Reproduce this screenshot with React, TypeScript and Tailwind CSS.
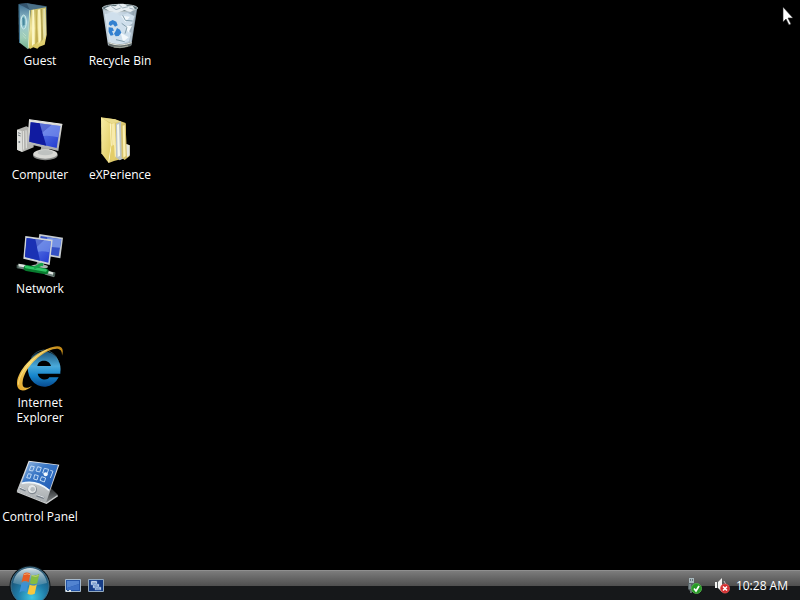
import type { ReactNode } from "react";

function GuestIcon() {
  return (
    <svg viewBox="48 6 144 144" className="size-12" aria-hidden="true">
      <defs>
        <linearGradient id="guestCover" x1="0" y1="0" x2="0" y2="1">
          <stop offset="0" stopColor="#3f6f92" />
          <stop offset="0.4" stopColor="#9cc8d2" />
          <stop offset="0.75" stopColor="#9fcdb6" />
          <stop offset="1" stopColor="#6fae8c" />
        </linearGradient>
        <linearGradient id="guestPage" x1="0" y1="0" x2="0" y2="1">
          <stop offset="0" stopColor="#c9bd68" />
          <stop offset="0.5" stopColor="#f1e59b" />
          <stop offset="1" stopColor="#d9c65e" />
        </linearGradient>
      </defs>
      <path d="M58 11 L78 9 L140 19 L138 112 L120 126 L84 40Z" fill="#34556f" />
      <path d="M80 10 L139 20 L139 30 L90 32Z" fill="#4a6f86" />
      <path d="M92 30 L138 22 L140 104 L134 134 L118 140 L112 146 L100 142 L90 147 L84 140Z" fill="url(#guestPage)" />
      <path d="M97 30 L102 29 L104 130 L96 138Z" fill="#fbf6c6" />
      <path d="M107 30 L110 29 L114 124 L106 134Z" fill="#c2ae52" />
      <path d="M114 29 L120 28 L124 118 L116 132Z" fill="#fbf3bb" />
      <path d="M123 28 L126 27 L130 116 L124 126Z" fill="#b3a452" />
      <path d="M130 27 L135 26 L137 104 L131 120Z" fill="#e3e2b2" />
      <path d="M56 12 L90 30 L84 148 L57 127Z" fill="url(#guestCover)" />
      <path d="M56 12 L60 14 L60 130 L57 127Z" fill="#3f7290" />
      <ellipse cx="71" cy="66" rx="8" ry="21" fill="#8cc2cb" stroke="#d4eef0" strokeWidth="3" />
      <path d="M67 55 Q71 48 74 57 L74 75 L68 77Z" fill="#4a89a0" />
      <path d="M68 98 L78 108 M68 106 L78 116" stroke="#c7e7ce" strokeWidth="2" />
      <path d="M89 31 L85 146" stroke="#d2e6c4" strokeWidth="3" />
    </svg>
  );
}

function RecycleIcon() {
  return (
    <svg viewBox="48 6 144 144" className="size-12" aria-hidden="true">
      <defs>
        <linearGradient id="binGlass" x1="0" y1="0" x2="1" y2="0">
          <stop offset="0" stopColor="#a9b9c4" />
          <stop offset="0.3" stopColor="#dce9f3" />
          <stop offset="0.7" stopColor="#b8c9d7" />
          <stop offset="1" stopColor="#7b8e9b" />
        </linearGradient>
      </defs>
      <path d="M67 23 L172 23 L154 136 Q120 150 84 136Z" fill="url(#binGlass)" />
      <ellipse cx="120" cy="24" rx="53" ry="11" fill="#596e75" stroke="#b3bfc3" strokeWidth="3" />
      <path d="M74 25 L92 17 L106 19 L116 12 L130 11 L144 19 L158 18 L165 28 L151 36 L133 31 L112 38 L88 33Z" fill="#e6edf1" />
      <path d="M116 13 L128 24 L144 20 M94 19 L108 29 L122 24 M148 24 L161 28" stroke="#9dafbb" strokeWidth="3" fill="none" />
      <path d="M74 43 L99 37 L119 47 L143 39 L163 48 L157 71 L137 82 L153 99 L147 124 L119 132 L90 125 L83 92Z" fill="#cfdfec" />
      <path d="M123 47 L150 50 L136 66Z M135 78 L156 77 L145 98Z M122 98 L146 112 L129 125Z" fill="#f4f9fc" />
      <path d="M128 46 L136 61 L158 63 M125 70 L141 82 L135 101 M108 119 L134 125" stroke="#829ead" strokeWidth="3" fill="none" />
      <g fill="#3280d0">
        <path d="M88 65 L98 60 L109 65 L113 76 L105 80 L99 73 L92 78 L86 73Z" />
        <path d="M86 82 L98 83 L102 92 L96 93 L101 105 L92 107 L85 95Z" />
        <path d="M111 84 L120 89 L124 98 L116 108 L107 109 L102 101 L107 93Z" />
      </g>
      <path d="M84 126 Q119 140 156 126 L153 138 Q119 151 87 138Z" fill="#626c6c" />
      <path d="M85 128 Q119 142 155 128" stroke="#e5e7df" strokeWidth="3" fill="none" />
      <path d="M101 141 Q124 145 144 138" stroke="#a5a99b" strokeWidth="3" fill="none" />
      <path d="M74 32 L91 127 M166 32 L151 127" stroke="#edf5f8" strokeWidth="2" opacity=".5" />
    </svg>
  );
}

function ScreenGradient({ id }: { id: string }) {
  return (
    <linearGradient id={id} x1="0" y1="0" x2="1" y2="1">
      <stop offset="0" stopColor="#2947c4" />
      <stop offset="0.4" stopColor="#101da3" />
      <stop offset="0.42" stopColor="#526ee0" />
      <stop offset="1" stopColor="#2038d0" />
    </linearGradient>
  );
}

function ComputerIcon() {
  return (
    <svg viewBox="48 18 144 144" className="size-12" aria-hidden="true">
      <defs>
        <ScreenGradient id="pcScreen" />
        <linearGradient id="pcMetal" x1="0" y1="0" x2="0" y2="1">
          <stop offset="0" stopColor="#e5e5e1" />
          <stop offset="1" stopColor="#a9abac" />
        </linearGradient>
      </defs>
      <path d="M51 59 L79 49 L100 59 L101 112 L67 126 L51 119Z" fill="#b4b4b0" />
      <path d="M51 59 L65 63 L67 126 L51 119Z" fill="#dedfdb" />
      <path d="M54 68 L62 71 M54 75 L62 78" stroke="#777d82" strokeWidth="3" />
      <circle cx="58" cy="96" r="3" fill="#737c84" />
      <path d="M70 63 L71 119 M78 61 L79 115" stroke="#e4e5e1" strokeWidth="3" />
      <path d="M124 106 L148 111 L148 129 L121 129Z" fill="#a7a8a3" />
      <ellipse cx="136" cy="136" rx="37" ry="15" fill="#868886" />
      <ellipse cx="136" cy="132" rx="36" ry="14" fill="#d8d8d4" />
      <ellipse cx="136" cy="128" rx="23" ry="8" fill="#bfc2c0" />
      <path d="M87 29 L187 43 L175 123 L81 101Z" fill="url(#pcMetal)" />
      <path d="M92 37 L181 48 L170 114 L88 95Z" fill="url(#pcScreen)" />
      <path d="M92 37 L119 40 L139 107 L88 95Z" fill="#101ba0" />
      <path d="M119 40 L181 48 L175 82 Q149 76 130 78Z" fill="#829af0" opacity=".6" />
      <path d="M87 29 L187 43" stroke="#e9e9e6" strokeWidth="3" />
    </svg>
  );
}

function FolderIcon() {
  return (
    <svg viewBox="48 18 144 144" className="size-12" aria-hidden="true">
      <defs>
        <linearGradient id="folderFront" x1="0" y1="0" x2="1" y2="1">
          <stop offset="0" stopColor="#f8eda7" />
          <stop offset="1" stopColor="#dfc95b" />
        </linearGradient>
      </defs>
      <path d="M63 22 L105 28 L137 39 L140 142 L122 148 L102 153 L86 159Z" fill="#dcc86b" />
      <path d="M94 41 L104 39 L109 137 L99 151Z" fill="#f8ebab" />
      <path d="M108 41 L123 34 L132 145 L119 151 L108 142Z" fill="#bac3c5" />
      <path d="M111 44 L117 42 L120 137 L113 141Z" fill="#f6f7eb" />
      <path d="M123 43 L137 42 L139 103 L149 106 L149 138 L134 150 L125 143Z" fill="#d6c06a" />
      <path d="M128 47 L134 45 L137 138 L130 143Z" fill="#faf0b3" />
      <path d="M139 102 L149 106 L149 136 L141 142Z" fill="#e4e6df" />
      <path d="M63 22 L91 41 L95 107 L86 159 L64 130Z" fill="url(#folderFront)" />
      <path d="M91 40 L94 107 L86 157" stroke="#fff8c8" strokeWidth="3" fill="none" />
      <path d="M94 109 L102 104 L105 146 L99 153 L90 147Z" fill="#e3cd68" />
      <path d="M64 23 L105 28 L122 35 L94 40Z" fill="#eadc8d" />
    </svg>
  );
}

function NetworkIcon() {
  return (
    <svg viewBox="48 15 144 144" className="size-12" aria-hidden="true">
      <defs><ScreenGradient id="netScreen" /></defs>
      <path d="M118 27 L189 38 L181 100 L109 87Z" fill="#c5cbd0" />
      <path d="M122 33 L184 43 L176 94 L113 82Z" fill="#3450c4" />
      <path d="M141 37 L184 43 L180 68 L145 65Z" fill="#7592e4" />
      <path d="M113 108 L133 113 L130 128 L106 126Z" fill="#8b9393" />
      <ellipse cx="118" cy="125" rx="26" ry="7" fill="#a9b3ae" />
      <path d="M76 33 L158 44 L149 120 L70 101Z" fill="#d0d5d8" />
      <path d="M80 39 L153 49 L145 113 L75 96Z" fill="url(#netScreen)" />
      <path d="M80 39 L106 43 L120 107 L75 96Z" fill="#1a31b4" />
      <path d="M106 43 L153 49 L148 82 Q129 77 114 80Z" fill="#7f9ceb" opacity=".6" />
      <path d="M55 123 L82 128 M136 142 L164 150" stroke="#70817d" strokeWidth="14" />
      <path d="M55 120 L82 125 M136 139 L164 147" stroke="#dfe5e1" strokeWidth="7" />
      <path d="M80 129 L137 139" stroke="#087b2f" strokeWidth="18" strokeLinecap="round" />
      <path d="M78 126 L137 136" stroke="#2fc765" strokeWidth="8" strokeLinecap="round" />
      <path d="M102 129 L124 118 L130 119" stroke="#16a54a" strokeWidth="9" fill="none" />
      <path d="M50 119 L55 119 L55 131 L50 129Z M160 142 L166 143 L165 155 L159 153Z" fill="#445850" />
    </svg>
  );
}

function ExplorerIcon() {
  return (
    <svg viewBox="48 12 144 144" className="size-12" aria-hidden="true">
      <defs>
        <linearGradient id="ieBlue" x1="0" y1="0" x2="0" y2="1">
          <stop offset="0" stopColor="#1d567c" />
          <stop offset="0.42" stopColor="#4aaadb" />
          <stop offset="0.68" stopColor="#1787cd" />
          <stop offset="1" stopColor="#084b90" />
        </linearGradient>
        <linearGradient id="ieGold" x1="0" y1="1" x2="1" y2="0">
          <stop offset="0" stopColor="#e0a327" />
          <stop offset="0.45" stopColor="#f5d66b" />
          <stop offset="1" stopColor="#c18410" />
        </linearGradient>
      </defs>
      <path d="M181 96 A49 53 0 1 0 176 112 L148 112 C141 124 116 119 113 101 L181 101Z M112 78 C115 57 148 57 153 78Z" fill="url(#ieBlue)" fillRule="evenodd" />
      <path d="M94 53 Q106 33 131 30 Q163 32 175 63" stroke="#5c9dba" strokeWidth="3" fill="none" opacity=".5" />
      <path d="M186 47 C195 19 178 11 141 27 C96 44 54 92 51 127 C49 157 76 158 96 138 C77 148 65 145 68 125 C73 88 111 48 145 33 C173 20 187 25 186 47Z" fill="url(#ieGold)" />
      <path d="M56 134 C53 106 92 54 142 29" stroke="#fff2a5" strokeWidth="2" fill="none" />
    </svg>
  );
}

function ControlPanelIcon() {
  return (
    <svg viewBox="48 9 144 144" className="size-12" aria-hidden="true">
      <defs>
        <linearGradient id="panelBlue" x1="0" y1="0" x2="1" y2="1">
          <stop offset="0" stopColor="#9dbde2" />
          <stop offset="0.4" stopColor="#3b78c6" />
          <stop offset="1" stopColor="#1d58b4" />
        </linearGradient>
        <linearGradient id="panelMetal" x1="0" y1="0" x2="0" y2="1">
          <stop offset="0" stopColor="#e8eaec" />
          <stop offset="1" stopColor="#a6abae" />
        </linearGradient>
        <linearGradient id="panelStand" x1="0" y1="0" x2="0" y2="1">
          <stop offset="0" stopColor="#26292b" />
          <stop offset="1" stopColor="#8d9193" />
        </linearGradient>
      </defs>
      <path d="M152 98 L174 120 L140 146 L128 138Z" fill="url(#panelStand)" />
      <path d="M86 17 L178 29 L138 143 L50 109Z" fill="url(#panelMetal)" />
      <path d="M88 20 L174 31 L149 104 Q112 76 65 84Z" fill="url(#panelBlue)" />
      <g fill="none" stroke="#bed9f5" strokeWidth="3">
        <path d="M93 33 L103 35 L98 48 L88 46Z M113 35 L124 38 L119 51 L108 48Z M133 40 L146 43 L141 57 L128 54Z" />
        <path d="M85 56 L94 58 L90 70 L80 68Z M104 59 L115 62 L111 75 L101 72Z M125 65 L137 69 L133 81 L120 76Z M151 46 L159 49 L151 69" />
      </g>
      <circle cx="137" cy="58" r="6" fill="#f3faff" />
      <path d="M65 85 Q110 74 147 106" stroke="#eef6fd" strokeWidth="5" fill="none" />
      <path d="M60 99 L77 106 M110 121 L132 129" stroke="#747d87" strokeWidth="7" />
      <path d="M60 97 L77 104 M110 119 L132 127" stroke="#e3e7ea" strokeWidth="3" />
      <circle cx="97" cy="104" r="14" fill="#818991" />
      <circle cx="96" cy="102" r="12" fill="#e5e8e9" />
      <circle cx="98" cy="103" r="7" fill="#b6bcc0" />
      <path d="M51 110 L139 145 L173 122" stroke="#c8cbcc" strokeWidth="4" fill="none" />
    </svg>
  );
}

function StartOrb() {
  return (
    <svg viewBox="0 0 42 42" className="size-[42px]" aria-hidden="true">
      <defs>
        <radialGradient id="orb" cx=".55" cy=".8" r=".75">
          <stop offset="0" stopColor="#3fc6e2" />
          <stop offset="0.5" stopColor="#1f7ca8" />
          <stop offset="1" stopColor="#1b4a6a" />
        </radialGradient>
        <linearGradient id="orbShine" x1="0" y1="0" x2="0" y2="1">
          <stop offset="0" stopColor="#d8e5e9" />
          <stop offset="1" stopColor="#6f9db3" stopOpacity=".45" />
        </linearGradient>
      </defs>
      <circle cx="21" cy="21" r="20.5" fill="#091116" />
      <circle cx="21" cy="21" r="19" fill="url(#orb)" stroke="#447087" strokeWidth="1" />
      <path d="M4 18 C7 -2 35 -2 38 18 Q21 23 4 18Z" fill="url(#orbShine)" />
      <g transform="translate(4 2) scale(.85)">
        <path d="M12.5 8 Q16 5 20.5 8 L18.5 18 Q14 15 10 18Z" fill="#e65d24" />
        <path d="M22 9 Q26 11 31 8 L28.5 19 Q24 21 20 19Z" fill="#84bd42" />
        <path d="M10 19.5 Q14 17 18 19.5 L16 30 Q12 27 7.5 30Z" fill="#3c91d4" />
        <path d="M19.5 21 Q24 23 28 20.5 L25.5 31.5 Q21 34 17 31.5Z" fill="#f7c83e" />
        <path d="M13 9 Q17 7 20 9 M22 10 Q27 12 30 10" stroke="#ffe1a2" strokeWidth="1" opacity=".65" fill="none" />
      </g>
    </svg>
  );
}

function ShowDesktopIcon() {
  return (
    <svg viewBox="0 0 16 14" className="h-3.5 w-4" aria-hidden="true">
      <path d="M.5.5h15v12H.5z" fill="#2455a8" stroke="#a5b9cc" />
      <path d="M2 2h12v3L2 9z" fill="#5284d0" />
      <path d="M2 9l12-4v6H2z" fill="#3d71c5" />
      <path d="M1 11h5v2H1z" fill="#d7e3e9" />
      <path d="M2 11h2v1H2z" fill="#315280" />
    </svg>
  );
}

function SwitcherIcon() {
  return (
    <svg viewBox="0 0 16 14" className="h-3.5 w-4" aria-hidden="true">
      <path d="M.5.5h15v12H.5z" fill="#173d86" stroke="#93a9be" />
      <path d="M3 2h6v4H3zM5 5h6v4H5zM7 8h6v3H7z" fill="#edf4fa" stroke="#497bc0" strokeWidth=".6" />
      <path d="M4 4h4M6 7h4M8 10h4" stroke="#4773b2" />
    </svg>
  );
}

function SafelyRemoveIcon() {
  return (
    <svg viewBox="0 0 16 16" className="size-4" aria-hidden="true">
      <path d="M3 0h5v5H3z" fill="#a9b9be" />
      <path d="M4 1h1v2H4zM6 1h1v2H6z" fill="#657477" />
      <path d="M2 5h7v6l-2 2H4l-2-2z" fill="#586468" />
      <path d="M3 6h2v5H3z" fill="#7a898d" />
      <path d="M5 12v3" stroke="#636d70" strokeWidth="2" />
      <circle cx="10.5" cy="10.5" r="5" fill="#269a26" stroke="#4fae48" />
      <path d="M8 10.5l2 2.5 3-5" stroke="#fff" strokeWidth="1.7" fill="none" />
    </svg>
  );
}

function MutedIcon() {
  return (
    <svg viewBox="0 0 16 16" className="size-4" aria-hidden="true">
      <path d="M1 4h3l4-4v14l-4-4H1z" fill="#f4f4f2" />
      <path d="M3.500 4v6" stroke="#5c6162" />
      <path d="M10 3q3 3 1 7" stroke="#bfc2c3" fill="none" />
      <circle cx="11" cy="10.500" r="4.500" fill="#d32b2d" stroke="#e25a58" strokeWidth=".8" />
      <path d="M9 8.500l4 4m0-4l-4 4" stroke="#fff" strokeWidth="1.600" />
    </svg>
  );
}

function Shortcut({ label, children }: { label: string; children: ReactNode }) {
  return (
    <button type="button" className="flex w-20 flex-col items-center pt-0.5 text-xs leading-[15px] text-white">
      {children}
      <span className="mt-[3px] w-full">{label}</span>
    </button>
  );
}

export default function App() {
  return (
    <div className="flex h-screen flex-col overflow-hidden bg-black font-['Open_Sans','Noto_Sans',sans-serif] text-white">
      <main className="grid min-h-0 flex-1 auto-cols-[80px] grid-flow-col grid-rows-[repeat(5,114px)] items-start">
        <Shortcut label="Guest"><GuestIcon /></Shortcut>
        <Shortcut label="Computer"><ComputerIcon /></Shortcut>
        <Shortcut label="Network"><NetworkIcon /></Shortcut>
        <Shortcut label="Internet Explorer"><ExplorerIcon /></Shortcut>
        <Shortcut label="Control Panel"><ControlPanelIcon /></Shortcut>
        <Shortcut label="Recycle Bin"><RecycleIcon /></Shortcut>
        <Shortcut label="eXPerience"><FolderIcon /></Shortcut>
      </main>

      <footer className="relative flex h-[30px] shrink-0 items-center justify-between border-t border-[#8f8f8f] bg-linear-to-b from-[#7c7c7c] from-0% via-[#505050] via-50% to-[#16181a] to-52% pr-3 pl-[65px]">
        <button type="button" aria-label="Start" className="absolute -top-1.5 left-[9px]">
          <StartOrb />
        </button>
        <nav aria-label="Quick Launch" className="flex gap-[7px]">
          <button type="button" aria-label="Show desktop"><ShowDesktopIcon /></button>
          <button type="button" aria-label="Switch between windows"><SwitcherIcon /></button>
        </nav>
        <div className="flex items-center text-xs leading-4">
          <button type="button" aria-label="Safely remove hardware" className="mr-3"><SafelyRemoveIcon /></button>
          <button type="button" aria-label="Volume muted" className="mr-1.5"><MutedIcon /></button>
          <time dateTime="10:28">10:28 AM</time>
        </div>
      </footer>

      <svg viewBox="0 0 12 20" className="absolute top-1.5 right-1.5 h-5 w-3" aria-hidden="true">
        <path d="M1 1v15l3-3 3 6 2-1-3-6h5z" fill="#fff" stroke="#222" strokeWidth=".6" />
      </svg>
    </div>
  );
}
